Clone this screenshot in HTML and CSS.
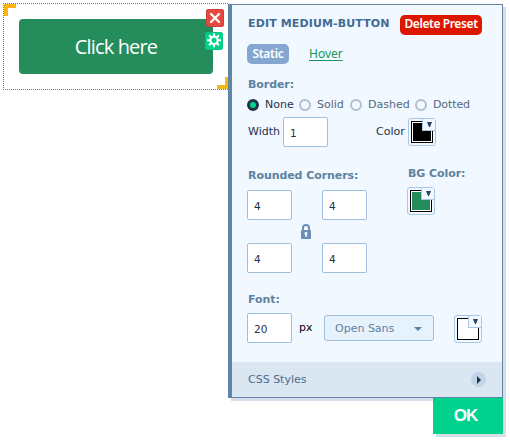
FILE: index.html
```html
<!DOCTYPE html>
<html lang="en">
<head>
<meta charset="utf-8">
<title>Edit medium-button</title>
<link rel="stylesheet" href="styles.css">
</head>
<body>
<main class="stage">
  <section class="preview">
    <span class="corner corner-start"></span>
    <span class="corner corner-end"></span>
    <button class="sample">Click here</button>
    <span class="tool tool-remove">
      <svg width="18" height="18" viewBox="0 0 18 18"><path d="M5 5l8 8M13 5l-8 8" stroke="#fff" stroke-width="2.3" stroke-linecap="round"/></svg>
    </span>
    <span class="tool tool-settings">
      <svg width="18" height="18" viewBox="0 0 18 18"><g fill="none" stroke="#fff"><circle cx="9" cy="8.300" r="3.700" stroke-width="2.200"/><path d="M9 1.300v3M9 12.300v3M2 8.300h3M13 8.300h3M4.100 3.400l1.900 1.900M12 11.300l1.900 1.900M13.900 3.400L12 5.300M6 11.300l-1.900 1.900" stroke-width="2"/></g></svg>
    </span>
  </section>
  <div class="side">
    <section class="panel">
      <div class="body">
        <header class="head"><h1>EDIT MEDIUM-BUTTON</h1><button class="delete">Delete Preset</button></header>
        <nav class="tabs"><span class="tab-active">Static</span><a class="tab-link">Hover</a></nav>
        <h2 class="border-title">Border:</h2>
        <div class="radios">
          <label class="radio on none"><i></i>None</label>
          <label class="radio solid"><i></i>Solid</label>
          <label class="radio dashed"><i></i>Dashed</label>
          <label class="radio"><i></i>Dotted</label>
        </div>
        <div class="width-row">
          <span class="width-label">Width</span><span class="field">1</span>
          <span class="color-label">Color</span>
          <span class="swatch black"><i class="fill"></i><i class="drop"></i></span>
        </div>
        <div class="columns">
          <div class="rounded">
            <h2>Rounded Corners:</h2>
            <div class="corners">
              <span class="field">4</span><span></span><span class="field">4</span>
              <span></span>
              <svg class="lock" width="10" height="15" viewBox="0 0 10 15"><path d="M2 7V3.800C2 2 3.200 1 5 1s3 1 3 2.800V7" fill="none" stroke="#6b90b8" stroke-width="2"/><rect y="6" width="10" height="9" rx="1" fill="#6b90b8"/><path d="M5 8a1.500 1.500 0 0 0-.8 2.800V13h1.600v-2.200A1.500 1.500 0 0 0 5 8z" fill="#f1f8ff"/></svg>
              <span></span>
              <span class="field">4</span><span></span><span class="field">4</span>
            </div>
          </div>
          <div class="background">
            <h2>BG Color:</h2>
            <span class="swatch green"><i class="fill"></i><i class="drop"></i></span>
          </div>
        </div>
        <h2 class="font-title">Font:</h2>
        <div class="font-row">
          <span class="field">20</span><span class="unit">px</span>
          <span class="select">Open Sans<i></i></span>
          <span class="swatch white"><i class="fill"></i><i class="drop"></i></span>
        </div>
      </div>
      <footer class="css-bar"><span>CSS Styles</span><i class="expand"></i></footer>
    </section>
    <button class="ok">OK</button>
  </div>
</main>
</body>
</html>
```

FILE: styles.css
```css
* { box-sizing: border-box; }
body {
  margin: 0;
  background: #fff;
  font: 11px/14px "DejaVu Sans", Verdana, sans-serif;
  color: #1f3248;
}
button { border: 0; padding: 0; margin: 0; }
h1, h2 { margin: 0; font-size: 11px; line-height: 14px; white-space: nowrap; }
h2 { color: #5e829f; padding-left: 1px; letter-spacing: -0.07px; }
i { font-style: normal; display: block; }
svg { display: block; }

.stage {
  display: flex;
  align-items: flex-start;
  width: 510px;
  height: 440px;
  padding: 3px 0 0 3px;
  overflow: hidden;
}

.preview {
  position: relative;
  flex: none;
  width: 225px;
  height: 87px;
  padding: 15px 0 0 15px;
  border: 1px dotted #777;
  border-right: 0;
}
.sample {
  display: block;
  width: 194px;
  height: 55px;
  border-radius: 4px;
  background: #258c5c;
  color: #fff;
  font: 20px/55px "Open Sans", sans-serif;
  letter-spacing: -0.85px;
}
.corner { position: absolute; width: 12px; height: 12px; border: 0 solid #f9b513; }
.corner-start { left: 0; top: 0; border-width: 4px 0 0 4px; }
.corner-end { right: 0; bottom: 0; width: 11px; border-width: 0 3px 4px 0; }
.tool { position: absolute; width: 18px; height: 18px; border-radius: 3px; }
.tool-remove { left: 202px; top: 5px; background: #e5493f; box-shadow: inset 0 0 0 1px #c9423c; }
.tool-settings { left: 201px; top: 28px; background: #00d28e; box-shadow: inset 0 0 0 1px #08c486; }

.side { display: flex; flex-direction: column; align-items: flex-end; width: 275px; padding-top: 1px; }
.panel {
  width: 275px;
  height: 394px;
  border: 1px solid #6184a9;
  border-left-width: 4px;
  background: #f1f8ff;
  box-shadow: 3px 3px 0 #d6dfe9;
}
.body { height: 357px; padding: 10px 0 0 15px; }
.head { display: flex; height: 20px; }
h1 { width: 153px; padding: 2px 0 0 1px; color: #426b94; letter-spacing: 0.13px; }
.delete {
  width: 82px;
  height: 20px;
  padding-bottom: 2px;
  border-radius: 5px;
  background: #db1700;
  color: #fff;
  font: 600 12px/18px "Noto Sans", sans-serif;
  letter-spacing: -0.4px;
}
.tabs { display: flex; height: 20px; margin-top: 9px; font: 12px/19px "Noto Sans", sans-serif; }
.tab-active {
  width: 42px;
  margin-right: 20px;
  border-radius: 5px;
  background: #86a6d2;
  color: #fff;
  font-weight: 600;
  text-align: center;
  letter-spacing: -0.3px;
}
.tab-link { color: #149660; text-decoration: underline; text-underline-offset: 2px; }
.border-title { margin-top: 14px; }

.radios { display: flex; height: 14px; margin-top: 6px; color: #56677e; }
.radio { display: flex; white-space: nowrap; }
.radio i { width: 12px; height: 12px; margin: 1px 6px 0 0; border: 2px solid #b0bfce; border-radius: 50%; }
.none { width: 52px; color: #1f3248; }
.none i { border: 3px solid #203449; background: #00d28e; }
.solid { width: 51px; }
.dashed { width: 65px; }
.radio:last-child { letter-spacing: -0.1px; }

.width-row { display: flex; height: 30px; margin-top: 5px; }
.width-label { width: 36px; padding: 8px 0 0 1px; }
.field {
  width: 45px;
  height: 30px;
  padding-left: 6px;
  border: 1px solid #a0bfdd;
  border-radius: 2px;
  background: #fff;
  font-size: 10.5px;
  line-height: 30px;
}
.color-label { width: 32px; margin-left: 48px; padding-top: 8px; }
.swatch {
  position: relative;
  display: block;
  flex: none;
  width: 28px;
  height: 28px;
  padding: 2px;
  border: 1px solid #a9c8e8;
  border-radius: 3px;
}
.width-row .swatch { margin-top: 1px; }
.fill { width: 22px; height: 22px; border: 1px solid #000; box-shadow: inset 0 0 0 1px #fff; }
.black .fill { background: #000; }
.green .fill { background: #258c5c; }
.white .fill { background: #fff; }
.drop {
  position: absolute;
  top: 0;
  right: 0;
  width: 13px;
  height: 12px;
  border: 1px solid #a9c8e8;
  border-width: 0 0 1px 1px;
  background: #f1f8ff;
}
.drop::before {
  content: "";
  display: block;
  margin: 3px 0 0 4px;
  width: 5px;
  height: 5px;
  background: #294462;
  clip-path: polygon(0 0, 100% 0, 60% 100%, 40% 100%);
}

.columns { display: flex; height: 104px; margin-top: 22px; }
.rounded { width: 160px; }
.corners { display: grid; grid-template-columns: 45px 30px 45px; grid-template-rows: 30px 23px 30px; margin-top: 7px; }
.lock { margin: 4px 0 0 9px; }
.background { margin-top: -2px; }
.background .swatch { margin-top: 6px; }

.font-title { margin-top: 20px; }
.font-row { display: flex; margin-top: 6px; }
.unit { width: 32px; padding: 8px 0 0 7px; color: #000; }
.select {
  display: flex;
  align-items: center;
  justify-content: space-between;
  width: 110px;
  height: 26px;
  margin: 2px 20px 0 0;
  padding: 1px 11px 0 10px;
  border: 1px solid #a0bfdd;
  border-radius: 3px;
  background: #e7f2ff;
  color: #5e829f;
}
.select i { width: 8px; height: 4px; margin-top: 1px; background: #5e829f; clip-path: polygon(0 0, 100% 0, 50% 100%); }
.font-row .swatch { margin-top: 2px; }

.css-bar {
  display: flex;
  align-items: center;
  justify-content: space-between;
  height: 35px;
  padding: 0 16px;
  background: #dae6f2;
  color: #4c6b8e;
}
.expand { width: 15px; height: 15px; border-radius: 50%; background: #c0d5e9; }
.expand::before { content: ""; display: block; width: 4px; height: 8px; margin: 4px 0 0 6px; background: #203449; clip-path: polygon(0 0, 100% 50%, 0 100%); }
.ok {
  position: relative;
  width: 70px;
  height: 36px;
  background: #00d28e;
  box-shadow: 3px 3px 0 #d6dfe9;
  color: #fff;
  font: bold 17px/36px "Liberation Sans", sans-serif;
  letter-spacing: -1px;
  padding-right: 5px;
}
```
